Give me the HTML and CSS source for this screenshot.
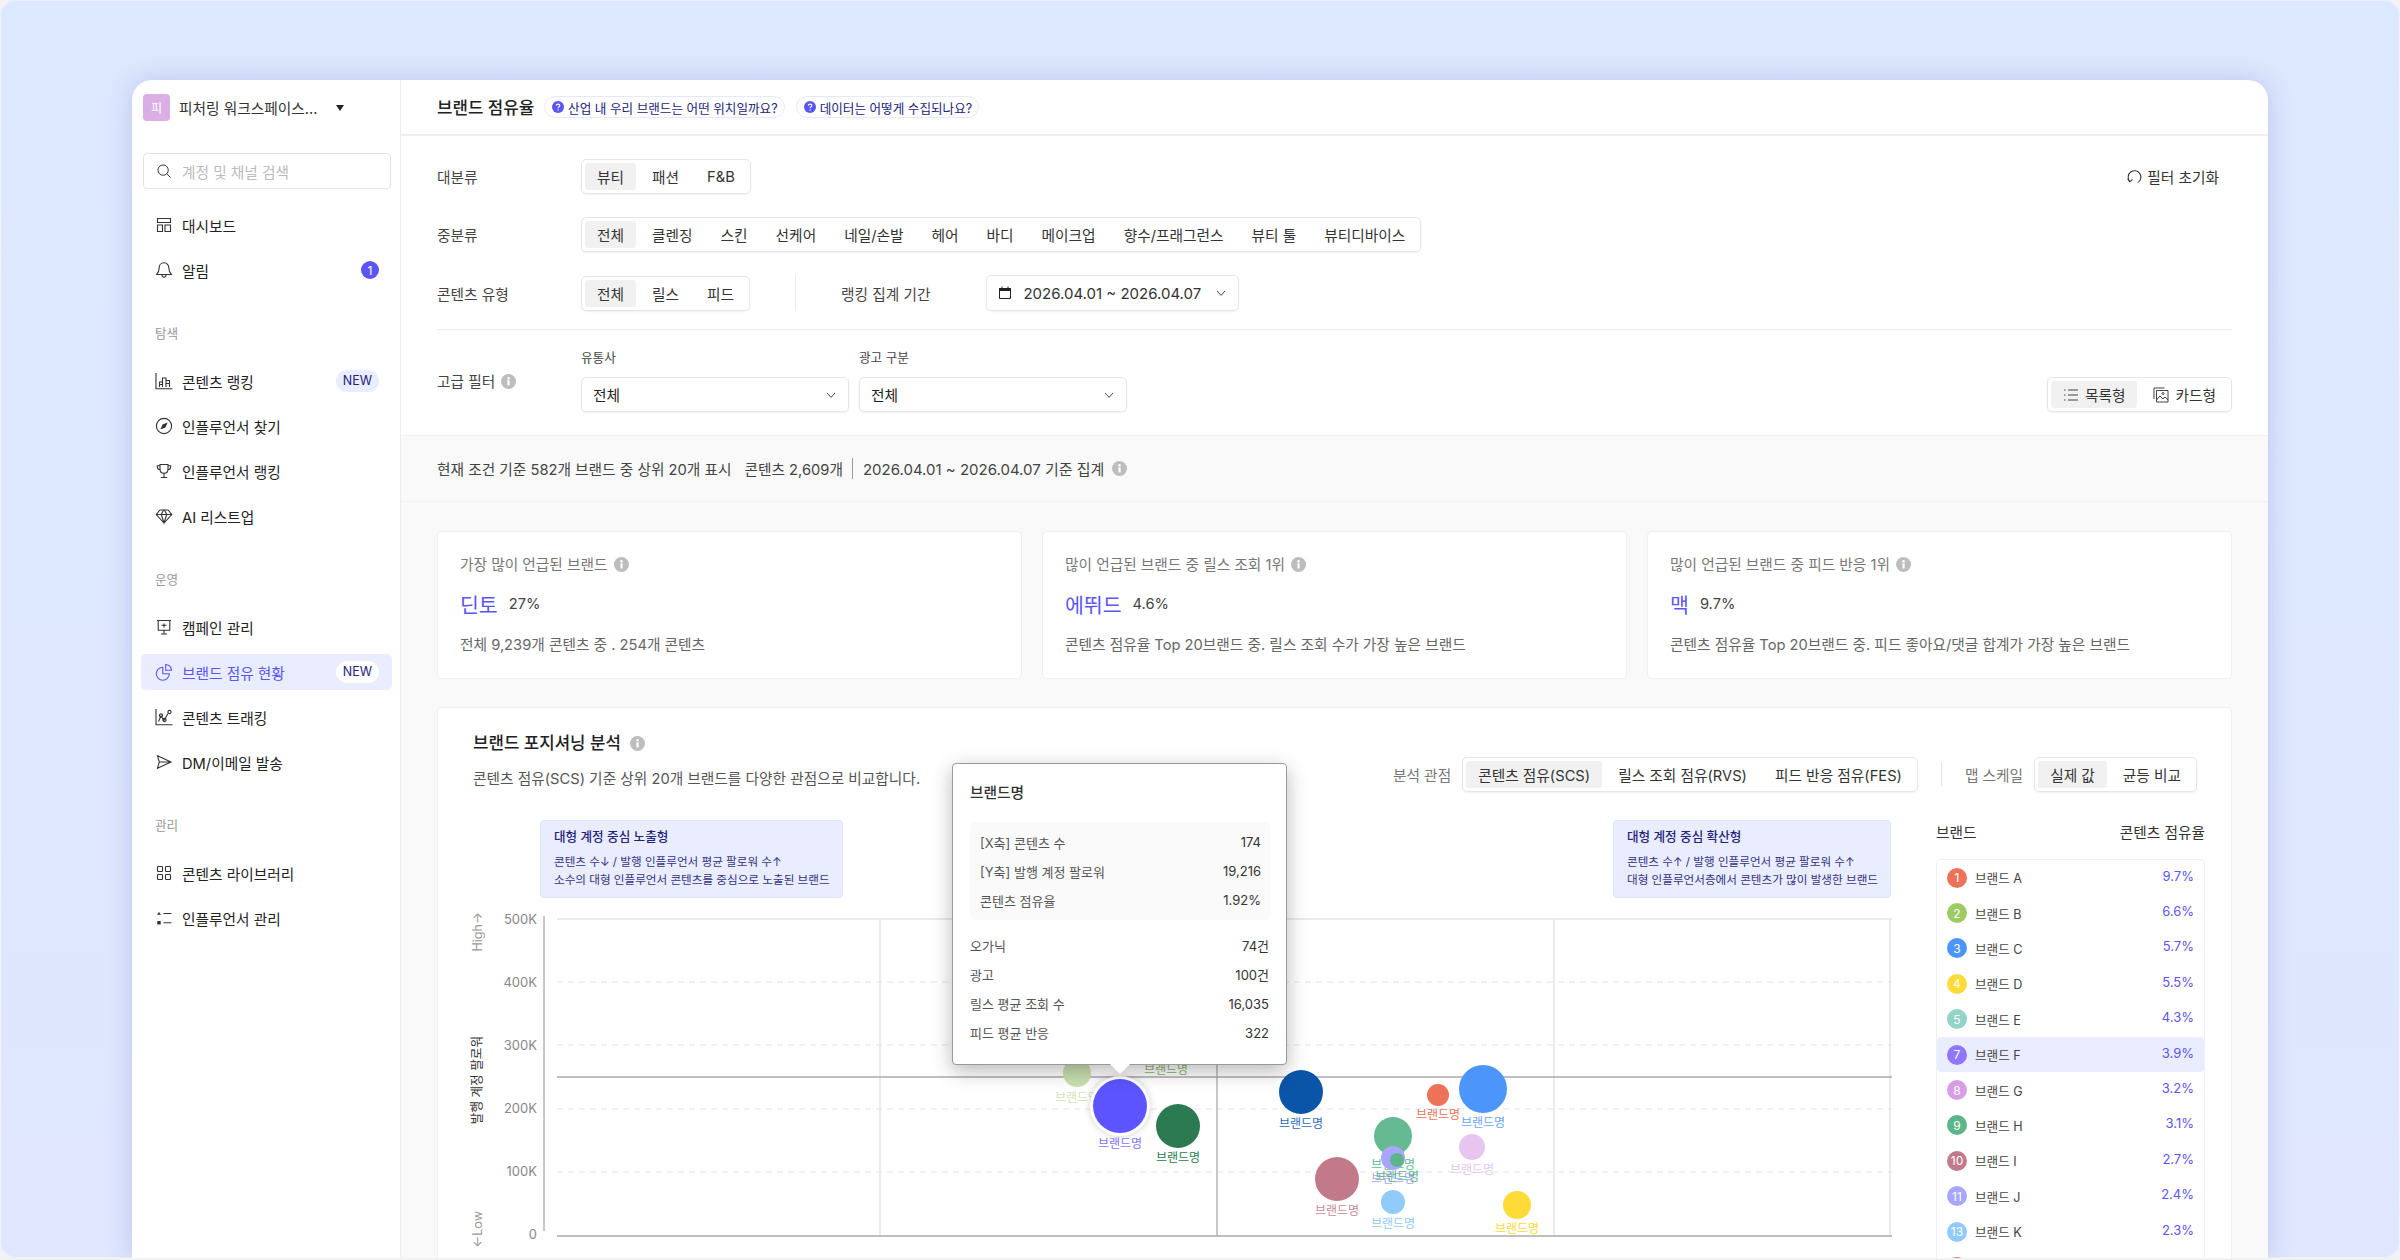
FILE: index.html
```html
<!DOCTYPE html>
<html lang="ko">
<head>
<meta charset="utf-8">
<title>브랜드 점유율</title>
<link rel="stylesheet" href="styles.css">
</head>
<body>
<svg class="defs" width="0" height="0" aria-hidden="true">
  <symbol id="i-info" viewBox="0 0 12 12"><circle cx="6" cy="6" r="6" fill="#bdbdbd"/><rect x="5.2" y="5" width="1.7" height="4.2" fill="#fff"/><circle cx="6" cy="3.3" r="1" fill="#fff"/></symbol>
  <symbol id="i-q" viewBox="0 0 12 12"><circle cx="6" cy="6" r="6" fill="#5b55f5"/><path d="M4.300 4.700c0-1 .8-1.600 1.800-1.600s1.700.6 1.700 1.500c0 1.300-1.700 1.300-1.700 2.600" fill="none" stroke="#fff" stroke-width="1.100"/><circle cx="6.100" cy="8.900" r=".7" fill="#fff"/></symbol>
  <symbol id="i-chev" viewBox="0 0 12 12"><path d="M2 4l4 4.400L10 4" fill="none" stroke="#444" stroke-width="1"/></symbol>
</svg>
<div class="frame">
  <div class="window">
    <aside class="side">
      <div class="workspace">
        <span class="ws-logo">피</span>
        <span class="ws-name">피처링 워크스페이스...</span>
        <span class="ws-caret"></span>
      </div>
      <div class="search">
        <svg class="ico" viewBox="0 0 18 18"><circle cx="8" cy="8" r="5.800"/><path d="M12.300 12.300l4 4"/></svg>
        <span>계정 및 채널 검색</span>
      </div>
      <nav class="nav">
        <a class="nav-item"><svg class="ico" viewBox="0 0 18 18"><path d="M2.500 2.500h13v4h-13zM2.500 9h5v6.500h-5zM10 9h5.500v6.500H10z"/></svg><span class="nav-text">대시보드</span></a>
        <a class="nav-item"><svg class="ico" viewBox="0 0 18 18"><path d="M9 1.800c-3 0-4.800 2.300-4.800 5 0 3.700-1.500 5.500-2.600 6.700h14.800c-1.100-1.200-2.600-3-2.600-6.700 0-2.700-1.800-5-4.800-5zM7 13.700c0 1.600.8 2.500 2 2.500s2-.9 2-2.500"/></svg><span class="nav-text">알림</span><span class="count">1</span></a>
        <div class="nav-label">탐색</div>
        <a class="nav-item"><svg class="ico" viewBox="0 0 18 18"><path d="M1 1v15.800h16.500M4.500 15V10h3v5M7.500 15V6h3.500v9M11 15V8.500h3.500V15M4.500 12.500h3M11 11.500h3.500"/></svg><span class="nav-text">콘텐츠 랭킹</span><span class="new">NEW</span></a>
        <a class="nav-item"><svg class="ico" viewBox="0 0 18 18"><circle cx="9" cy="9" r="7.600"/><path class="solid" d="M12.600 5.400L10.500 10.500 5.400 12.600 7.500 7.500z"/></svg><span class="nav-text">인플루언서 찾기</span></a>
        <a class="nav-item"><svg class="ico" viewBox="0 0 18 18"><path d="M5 2.500h8V7c0 2.600-1.700 4.300-4 4.300S5 9.600 5 7zM5 3.800H2.200C2.200 6.500 3.300 7.800 5.300 8M13 3.800h2.800c0 2.700-1.100 4-3.100 4.200M9 11.300v3.700M5.800 15.500h6.400"/></svg><span class="nav-text">인플루언서 랭킹</span></a>
        <a class="nav-item"><svg class="ico" viewBox="0 0 18 18"><path d="M5 3h8l3.800 4.500L9 16 1.200 7.500zM1.200 7.500h15.600M6.300 7.500L9 16l2.700-8.500L9.500 3h-1z"/></svg><span class="nav-text">AI 리스트업</span></a>
        <div class="nav-label">운영</div>
        <a class="nav-item"><svg class="ico" viewBox="0 0 18 18"><path d="M2 2.500h14M3.200 2.500v9.800h11.600V2.500M9 12.300v3.500M6 16h6M9 5.500v4M6.500 7.300h5"/></svg><span class="nav-text">캠페인 관리</span></a>
        <a class="nav-item active"><svg class="ico" viewBox="0 0 18 18"><path d="M7.800 4.200a6.500 6.500 0 1 0 6.500 6.500H7.800zM10.700 1.500v5.800h5.800a5.800 5.800 0 0 0-5.800-5.800z"/></svg><span class="nav-text">브랜드 점유 현황</span><span class="new">NEW</span></a>
        <a class="nav-item"><svg class="ico" viewBox="0 0 18 18"><path d="M1 1v15.800h16.500M3.500 13.500L6 8l3 4.500L13 5.500"/><circle cx="6" cy="7.500" r="1.600"/><circle cx="9.500" cy="12" r="1.600"/><circle cx="14.500" cy="4" r="1.600"/></svg><span class="nav-text">콘텐츠 트래킹</span></a>
        <a class="nav-item"><svg class="ico" viewBox="0 0 18 18"><path d="M2.500 2.800L16 9 2.500 15.200l1.800-6.200zM4.300 9H16"/></svg><span class="nav-text">DM/이메일 발송</span></a>
        <div class="nav-label">관리</div>
        <a class="nav-item"><svg class="ico" viewBox="0 0 18 18"><rect x="2.500" y="2.500" width="5" height="5" rx=".8"/><rect x="10.500" y="2.500" width="5" height="5" rx=".8"/><rect x="2.500" y="10.500" width="5" height="5" rx=".8"/><rect x="10.500" y="10.500" width="5" height="5" rx=".8"/></svg><span class="nav-text">콘텐츠 라이브러리</span></a>
        <a class="nav-item"><svg class="ico" viewBox="0 0 18 18"><path class="solid" d="M4 3l2 2.700H2zM2.300 12h3.400v3.400H2.300z"/><path d="M8.500 4.500h8M8.500 13.800h8"/></svg><span class="nav-text">인플루언서 관리</span></a>
      </nav>
    </aside>

    <main class="main">
      <header class="topbar">
        <h1 class="page-title">브랜드 점유율</h1>
        <a class="help"><svg class="help-i"><use href="#i-q"/></svg>산업 내 우리 브랜드는 어떤 위치일까요?</a>
        <a class="help"><svg class="help-i"><use href="#i-q"/></svg>데이터는 어떻게 수집되나요?</a>
      </header>

      <section class="filters">
        <div class="f-row">
          <span class="f-label">대분류</span>
          <div class="seg"><b class="on">뷰티</b><b>패션</b><b>F&amp;B</b></div>
          <a class="reset"><svg class="reset-i" viewBox="0 0 16 16"><path d="M3.500 12.500A6 6 0 1 1 11 13.800M1.500 10l2 3 2.600-2.200"/></svg>필터 초기화</a>
        </div>
        <div class="f-row">
          <span class="f-label">중분류</span>
          <div class="seg"><b class="on">전체</b><b>클렌징</b><b>스킨</b><b>선케어</b><b>네일/손발</b><b>헤어</b><b>바디</b><b>메이크업</b><b>향수/프래그런스</b><b>뷰티 툴</b><b>뷰티디바이스</b></div>
        </div>
        <div class="f-row">
          <span class="f-label">콘텐츠 유형</span>
          <div class="seg"><b class="on">전체</b><b>릴스</b><b>피드</b></div>
          <span class="f-div"></span>
          <span class="f-sub">랭킹 집계 기간</span>
          <div class="date">
            <svg class="cal" viewBox="0 0 14 14"><path class="cal-top" d="M1 2h12v3H1z"/><path class="cal-box" d="M1.500 2.500h11v10h-11zM4 .5v2M10 .5v2"/></svg>
            <span class="date-text">2026.04.01 ~ 2026.04.07</span>
            <svg class="chev"><use href="#i-chev"/></svg>
          </div>
        </div>
        <hr class="f-line">
        <div class="adv">
          <span class="f-label adv-label">고급 필터<svg class="info"><use href="#i-info"/></svg></span>
          <div class="adv-col"><span class="adv-cap">유통사</span><div class="select"><span>전체</span><svg class="chev"><use href="#i-chev"/></svg></div></div>
          <div class="adv-col"><span class="adv-cap">광고 구분</span><div class="select"><span>전체</span><svg class="chev"><use href="#i-chev"/></svg></div></div>
          <div class="seg view">
            <b class="on"><svg class="v-i" viewBox="0 0 16 16"><path d="M1 3h1.500M1 8h1.500M1 13h1.500M5 3h10M5 8h10M5 13h10"/></svg>목록형</b>
            <b><svg class="v-i" viewBox="0 0 16 16"><path d="M1 12V1h10.500M3.500 15V3.500H15V15zM3.500 13l3.500-4 3 3 2-2 3 3"/><circle cx="10" cy="6.500" r="1"/></svg>카드형</b>
          </div>
        </div>
      </section>

      <div class="summary">
        <span>현재 조건 기준 582개 브랜드 중 상위 20개 표시</span>
        <span class="sum-c">콘텐츠 2,609개</span>
        <span class="sum-d">2026.04.01 ~ 2026.04.07 기준 집계</span>
        <svg class="info"><use href="#i-info"/></svg>
      </div>

      <div class="content">
        <div class="cards">
          <article class="card">
            <div class="c-title">가장 많이 언급된 브랜드<svg class="info"><use href="#i-info"/></svg></div>
            <div class="c-val"><strong>딘토</strong><span>27%</span></div>
            <div class="c-desc">전체 9,239개 콘텐츠 중 . 254개 콘텐츠</div>
          </article>
          <article class="card">
            <div class="c-title">많이 언급된 브랜드 중 릴스 조회 1위<svg class="info"><use href="#i-info"/></svg></div>
            <div class="c-val"><strong>에뛰드</strong><span>4.6%</span></div>
            <div class="c-desc">콘텐츠 점유율 Top 20브랜드 중. 릴스 조회 수가 가장 높은 브랜드</div>
          </article>
          <article class="card">
            <div class="c-title">많이 언급된 브랜드 중 피드 반응 1위<svg class="info"><use href="#i-info"/></svg></div>
            <div class="c-val"><strong>맥</strong><span>9.7%</span></div>
            <div class="c-desc">콘텐츠 점유율 Top 20브랜드 중. 피드 좋아요/댓글 합계가 가장 높은 브랜드</div>
          </article>
        </div>

        <section class="panel">
          <div class="p-head">
            <div>
              <h2 class="p-title">브랜드 포지셔닝 분석<svg class="info info-l"><use href="#i-info"/></svg></h2>
              <p class="p-desc">콘텐츠 점유(SCS) 기준 상위 20개 브랜드를 다양한 관점으로 비교합니다.</p>
            </div>
            <div class="p-ctrl">
              <span class="f-sub gray">분석 관점</span>
              <div class="seg"><b class="on">콘텐츠 점유(SCS)</b><b>릴스 조회 점유(RVS)</b><b>피드 반응 점유(FES)</b></div>
              <span class="p-div"></span>
              <span class="f-sub gray">맵 스케일</span>
              <div class="seg"><b class="on">실제 값</b><b>균등 비교</b></div>
            </div>
          </div>

          <div class="p-body">
            <div class="chart">
              <div class="quads">
                <div class="quad">
                  <h3>대형 계정 중심 노출형</h3>
                  <p>콘텐츠 수↓ / 발행 인플루언서 평균 팔로워 수↑</p>
                  <p>소수의 대형 인플루언서 콘텐츠를 중심으로 노출된 브랜드</p>
                </div>
                <div class="quad">
                  <h3>대형 계정 중심 확산형</h3>
                  <p>콘텐츠 수↑ / 발행 인플루언서 평균 팔로워 수↑</p>
                  <p>대형 인플루언서층에서 콘텐츠가 많이 발생한 브랜드</p>
                </div>
              </div>

              <svg class="plot" viewBox="0 0 1430 340" width="1430" height="340">
                <g class="grid-v"><path d="M406 0V317M1080 0V317M1416 0V317"/></g>
                <g class="grid-h"><path d="M83 63H1418M83 126H1418M83 190H1418M83 253H1418"/></g>
                <path class="grid-top" d="M83 0H1418"/>
                <path class="axis" d="M70 -3V312M83 158H1418M83 317H1418M743 0V317"/>
              </svg>

              <span class="y-side y-high">High→</span>
              <span class="y-side y-name">발행 계정 팔로워</span>
              <span class="y-side y-low">←Low</span>
              <span class="tick" style="top:90px">500K</span>
              <span class="tick" style="top:153px">400K</span>
              <span class="tick" style="top:216px">300K</span>
              <span class="tick" style="top:279px">200K</span>
              <span class="tick" style="top:342px">100K</span>
              <span class="tick" style="top:405px">0</span>

              <div class="xticks"><span>0</span><span>25</span><span>50</span><span>75</span><span>100</span><span>125</span><span>150</span><span>175</span><span>200</span><span>225</span><span>250</span><span>275</span><span>300</span><span>325</span><span>350</span><span>375</span><span>400</span><span>425</span><span>450</span></div>

              <i class="bub" style="left:603px;top:253px;width:28px;height:28px;background:#c9e0b0"></i>
              <span class="blabel" style="left:603px;top:268px;color:#cfe3b8">브랜드명</span>
              <span class="blabel" style="left:692px;top:240px;color:#8cb56a">브랜드명</span>
              <i class="bub" style="left:704px;top:306px;width:44px;height:44px;background:#2b7a52"></i>
              <span class="blabel" style="left:704px;top:328px;color:#2b7a52">브랜드명</span>
              <i class="bub" style="left:827px;top:272px;width:44px;height:44px;background:#0b55a8"></i>
              <span class="blabel" style="left:827px;top:294px;color:#2f6cb8">브랜드명</span>
              <i class="bub" style="left:863px;top:359px;width:44px;height:44px;background:#c27a8a"></i>
              <span class="blabel" style="left:863px;top:381px;color:#c98a98">브랜드명</span>
              <i class="bub" style="left:919px;top:382px;width:24px;height:24px;background:#90cbf9"></i>
              <span class="blabel" style="left:919px;top:394px;color:#90cbf9">브랜드명</span>
              <i class="bub" style="left:919px;top:316px;width:38px;height:38px;background:#66ba91"></i>
              <span class="blabel" style="left:919px;top:335px;color:#66ba91">브랜드명</span>
              <span class="blabel" style="left:919px;top:349px;color:#a8a6ff">브랜드명</span>
              <span class="blabel" style="left:923px;top:347px;color:#5db58a">브랜드명</span>
              <i class="bub" style="left:919px;top:338px;width:24px;height:24px;background:#a8a6ff"></i>
              <i class="bub" style="left:923px;top:340px;width:14px;height:14px;background:#5db58a"></i>
              <i class="bub" style="left:964px;top:275px;width:22px;height:22px;background:#ec7358"></i>
              <span class="blabel" style="left:964px;top:285px;color:#ec7358">브랜드명</span>
              <i class="bub" style="left:1009px;top:269px;width:48px;height:48px;background:#4c96fb"></i>
              <span class="blabel" style="left:1009px;top:293px;color:#6aa7fb">브랜드명</span>
              <i class="bub" style="left:998px;top:327px;width:26px;height:26px;background:#e6c6ef"></i>
              <span class="blabel" style="left:998px;top:340px;color:#e6c6ef">브랜드명</span>
              <i class="bub" style="left:1043px;top:385px;width:28px;height:28px;background:#ffdb38"></i>
              <span class="blabel" style="left:1043px;top:399px;color:#ffdb38">브랜드명</span>
              <i class="bub selected" style="left:646px;top:286px;width:54px;height:54px;background:#5c54ff"></i>
              <span class="blabel" style="left:646px;top:314px;color:#7d76ff">브랜드명</span>

              <div class="tip">
                <div class="tip-title">브랜드명</div>
                <div class="tip-box">
                  <div class="tip-row"><span>[X축] 콘텐츠 수</span><b>174</b></div>
                  <div class="tip-row"><span>[Y축] 발행 계정 팔로워</span><b>19,216</b></div>
                  <div class="tip-row"><span>콘텐츠 점유율</span><b>1.92%</b></div>
                </div>
                <div class="tip-rows">
                  <div class="tip-row"><span>오가닉</span><b>74건</b></div>
                  <div class="tip-row"><span>광고</span><b>100건</b></div>
                  <div class="tip-row"><span>릴스 평균 조회 수</span><b>16,035</b></div>
                  <div class="tip-row"><span>피드 평균 반응</span><b>322</b></div>
                </div>
              </div>
            </div>

            <div class="rank">
              <div class="rank-head"><span>브랜드</span><span>콘텐츠 점유율</span></div>
              <ul class="rank-list">
                <li><i style="background:#ec7358">1</i><span>브랜드 A</span><b>9.7%</b></li>
                <li><i style="background:#9ccb62">2</i><span>브랜드 B</span><b>6.6%</b></li>
                <li><i style="background:#4c96fb">3</i><span>브랜드 C</span><b>5.7%</b></li>
                <li><i style="background:#ffdb38">4</i><span>브랜드 D</span><b>5.5%</b></li>
                <li><i style="background:#93d3c8">5</i><span>브랜드 E</span><b>4.3%</b></li>
                <li class="hl"><i style="background:#8f75ff">7</i><span>브랜드 F</span><b>3.9%</b></li>
                <li><i style="background:#d69fe3">8</i><span>브랜드 G</span><b>3.2%</b></li>
                <li><i style="background:#5db58a">9</i><span>브랜드 H</span><b>3.1%</b></li>
                <li><i style="background:#c27a8a">10</i><span>브랜드 I</span><b>2.7%</b></li>
                <li><i style="background:#a8a6ff">11</i><span>브랜드 J</span><b>2.4%</b></li>
                <li><i style="background:#90cbf9">13</i><span>브랜드 K</span><b>2.3%</b></li>
                <li><i style="background:#ec7358">14</i><span>브랜드 L</span><b>2.1%</b></li>
              </ul>
            </div>
          </div>
        </section>
      </div>
    </main>
  </div>
</div>
</body>
</html>
```
FILE: styles.css
```css
* { box-sizing: border-box; }
html, body { margin: 0; height: 1260px; overflow: hidden; background: #f2f2f2; }
body { font-family: Inter, "Noto Sans CJK KR", sans-serif; font-size: 14.7px; color: #222; }
.defs { position: absolute; }
h1, h2, h3, p, ul { margin: 0; padding: 0; }

.frame { height: 1258px; padding: 80px 132px 0; background: linear-gradient(180deg, #dce8fd, #dfe6fd); border-radius: 16px; overflow: hidden; box-shadow: inset 0 0 0 1px #eef1f8; }
.window { display: flex; height: 1178px; background: #fff; border-radius: 20px 20px 0 0; overflow: hidden; box-shadow: 0 0 24px rgba(70, 80, 190, .22); }

/* sidebar */
.side { flex: 0 0 269px; padding: 14px 8px 0 9px; border-right: 1px solid #eee; }
.workspace { display: flex; align-items: center; height: 27px; padding-left: 2px; }
.ws-logo { display: flex; align-items: center; justify-content: center; width: 27px; height: 27px; border-radius: 4px; background: #dcaee6; color: #fff; font-size: 12px; }
.ws-name { margin-left: 9px; font-size: 14.7px; color: #333; width: 157px; white-space: nowrap; }
.ws-caret { width: 0; height: 0; border: 4.5px solid transparent; border-top: 6px solid #222; border-bottom: 0; }
.search { display: flex; align-items: center; gap: 10px; height: 36px; margin: 32px 1px 18px 2px; padding: 0 12px; border: 1px solid #e2e2e2; border-radius: 4px; color: #bbb; font-size: 14.7px; }
.search .ico { width: 16px; height: 16px; }
.ico { flex: none; width: 18px; height: 18px; fill: none; stroke: #333; stroke-width: 1.1; }
.ico .solid { fill: #333; stroke: none; }
.nav { display: flex; flex-direction: column; gap: 9px; }
.nav-item { display: flex; align-items: center; gap: 9px; height: 36px; padding: 0 13px 0 14px; border-radius: 5px; font-size: 14.7px; color: #222; }
.nav-text { flex: 1; }
.nav-label { margin: 28px 0 11px 14px; height: 18px; line-height: 18px; font-size: 12.6px; color: #999; }
.count { display: flex; align-items: center; justify-content: center; width: 18px; height: 18px; border-radius: 50%; background: #5b55f5; color: #fff; font-size: 12px; }
.new { padding: 0 7px; height: 22px; line-height: 21px; border-radius: 12px; background: #e9edff; color: #23237a; font-size: 12.5px; }
.nav-item.active { background: #e9edff; color: #5b55f5; }
.nav-item.active .ico { stroke: #5b55f5; }
.nav-item.active .new { background: #fff; color: #23237a; }

/* main */
.main { flex: 1; min-width: 0; }
.topbar { display: flex; align-items: center; gap: 11px; height: 56px; padding: 0 36px; border-bottom: 2px solid #eee; }
.page-title { font-size: 16.8px; font-weight: 500; margin-right: -1px; white-space: nowrap; }
.help { display: flex; align-items: center; gap: 4px; height: 22px; padding: 0 6px 0 7px; border: 1px solid #e6e9fd; border-radius: 11px; font-size: 12.6px; color: #23237a; white-space: nowrap; }
.help-i { width: 12px; height: 12px; }
.info { width: 15px; height: 15px; margin-left: 6px; vertical-align: -2px; }
.info-l { margin-left: 9px; }

.filters { height: 300px; padding: 23px 36px 0; border-bottom: 1px solid #f0f0f0; }
.f-row { display: flex; align-items: center; margin-bottom: 23px; }
.f-label { flex: 0 0 144px; color: #444; }
.seg { display: inline-flex; gap: 4px; padding: 3px; border: 1px solid #e6e6e6; border-radius: 5px; box-shadow: 0 1px 2px rgba(0, 0, 0, .06); }
.seg b { display: flex; align-items: center; height: 27px; padding: 0 12px; border-radius: 3px; font-weight: 400; font-size: 14.7px; color: #333; white-space: nowrap; }
.seg b.on { background: #f1f1f1; }
.reset { display: flex; align-items: center; gap: 4px; margin-left: auto; margin-right: 13px; color: #333; }
.reset-i { width: 17px; height: 17px; fill: none; stroke: #333; stroke-width: 1; }
.f-div { width: 1px; height: 36px; margin: 0 45px; background: #eee; }
.f-sub { color: #444; white-space: nowrap; }
.f-sub.gray { color: #777; }
.date { display: flex; align-items: center; gap: 11px; width: 253px; height: 36px; margin-left: 56px; padding: 0 11px; border: 1px solid #e6e6e6; border-radius: 5px; box-shadow: 0 1px 2px rgba(0, 0, 0, .06); color: #333; }
.date .chev { margin-left: auto; }
.date-text { font-size: 15px; }
.cal { width: 14px; height: 14px; }
.cal-top { fill: #222; }
.cal-box { fill: none; stroke: #222; stroke-width: 1; }
.chev { width: 12px; height: 12px; flex: none; }
.f-line { height: 1px; margin: -5px 0 0; border: 0; background: #eee; }
.adv { display: flex; align-items: flex-end; margin-top: 19px; }
.adv-label { align-self: center; margin-top: -1px; }
.adv-col { display: flex; flex-direction: column; width: 268px; margin-right: 10px; gap: 10px; }
.adv-cap { font-size: 12.6px; color: #444; height: 18px; line-height: 18px; }
.select { display: flex; align-items: center; justify-content: space-between; height: 35px; padding: 0 11px; border: 1px solid #e6e6e6; border-radius: 5px; box-shadow: 0 1px 2px rgba(0, 0, 0, .06); }
.view { margin-left: auto; }
.view b { gap: 6px; }
.v-i { width: 16px; height: 16px; fill: none; stroke: #444; stroke-width: 1; }

.summary { display: flex; align-items: center; height: 66px; padding: 0 36px; background: #f9f9f9; border-bottom: 1px solid #f0f0f0; color: #444; white-space: nowrap; }
.sum-c { margin-left: 13px; padding-right: 9px; border-right: 1px solid #999; }
.sum-d { margin-left: 10px; font-size: 15px; }
.summary .info { margin-left: 8px; }
.content { padding: 29px 36px 0; background: #f9f9f9; height: 800px; }
.cards { display: grid; grid-template-columns: repeat(3, 1fr); gap: 20px; }
.card { height: 148px; padding: 23px 22px 0; background: #fff; border: 1px solid #f0f0f0; border-radius: 5px; }
.c-title { height: 20px; line-height: 20px; color: #777; }
.c-val { display: flex; align-items: center; gap: 11px; height: 32px; margin-top: 13px; }
.c-val strong { font-size: 20.5px; font-weight: 400; color: #5b55f5; }
.c-val span { color: #444; }
.c-desc { margin-top: 13px; color: #666; }

.panel { margin-top: 28px; height: 600px; padding: 23px 28px 0 36px; background: #fff; border: 1px solid #f0f0f0; border-radius: 5px; }
.p-head { display: flex; justify-content: space-between; margin-left: -1px; }
.p-title { height: 24px; line-height: 24px; font-size: 16.8px; font-weight: 500; }
.p-desc { margin-top: 14px; color: #555; line-height: 20px; }
.p-ctrl { display: flex; align-items: center; height: 36px; margin: 25px 6px 0 0; }
.p-ctrl .f-sub { margin-right: 11px; }
.p-div { width: 1px; height: 24px; margin: 0 23px; background: #e4e4e4; }
.p-body { display: flex; margin-top: 28px; }

.chart { position: relative; flex: 0 0 1462px; height: 460px; }
.quads { display: flex; justify-content: space-between; width: 1417px; height: 78px; padding-left: 66px; }
.quad { width: 303px; padding: 7px 13px; background: #eaedff; border: 1px solid #dfe4fb; border-radius: 4px; color: #33337f; font-size: 11.6px; line-height: 18px; }
.quad + .quad { width: 278px; }
.quad h3 { font-size: 12.6px; font-weight: 500; color: #23237a; line-height: 18px; margin-bottom: 7px; }
.quad p { white-space: nowrap; }
.plot { position: absolute; left: 0; top: 99px; overflow: visible; fill: none; }
.grid-v path { stroke: #e5e5e5; stroke-width: 1.5; }
.grid-h path { stroke: #e3e3e3; stroke-width: 1; stroke-dasharray: 6 5; }
.grid-top { stroke: #e5e5e5; stroke-width: 1.5; }
.axis { stroke: #aaa; stroke-width: 1.3; }
.y-side { position: absolute; writing-mode: vertical-rl; text-orientation: sideways; transform: rotate(180deg); font-size: 12.6px; color: #999; white-space: nowrap; }
.y-high { left: -4px; top: 92px; }
.y-low { left: -4px; top: 391px; }
.y-name { left: -8px; top: 216px; color: #333; }
.tick { position: absolute; left: 0; width: 63px; text-align: right; font-size: 13px; line-height: 18px; color: #888; }
.xticks { position: absolute; left: 52px; top: 437px; display: flex; }
.xticks span { width: 72px; text-align: center; font-size: 12px; line-height: 14px; color: #999; }

.bub { position: absolute; border-radius: 50%; transform: translate(-50%, -50%); }
.bub.selected { box-shadow: 0 0 0 3px #fff, 0 0 6px 4px rgba(0, 0, 0, .15); }
.blabel { position: absolute; transform: translate(-50%, 3px); font-size: 12px; line-height: 14px; white-space: nowrap; }
.tip { position: absolute; left: 478px; top: -57px; width: 335px; height: 302px; padding: 19px 17px; background: #fff; border: 1px solid #999; border-radius: 4px; box-shadow: 0 6px 20px rgba(0, 0, 0, .28); }
.tip::after { content: ""; position: absolute; left: 157px; bottom: -10px; width: 0; height: 0; border: 10px solid transparent; border-top-color: #fff; border-bottom: 0; }
.tip-title { font-size: 14.7px; font-weight: 500; line-height: 20px; color: #333; }
.tip-box { margin-top: 19px; padding: 5.5px 10px; width: 301px; background: #fafafa; border-radius: 6px; }
.tip-rows { margin-top: 11px; }
.tip-row { display: flex; justify-content: space-between; align-items: center; height: 29px; font-size: 13px; color: #555; }
.tip-row b { font-weight: 400; color: #333; font-size: 13px; }

.rank { flex: 0 0 269px; }
.rank-head { display: flex; justify-content: space-between; height: 26px; line-height: 26px; color: #333; }
.rank-list { margin-top: 13px; list-style: none; border: 1px solid #f0f0f0; border-radius: 5px; height: 410px; overflow: hidden; }
.rank-list li { display: flex; align-items: center; height: 35.4px; padding: 0 10px; font-size: 12.6px; color: #444; }
.rank-list li.hl { background: #e9edff; border-radius: 4px; }
.rank-list i { display: flex; align-items: center; justify-content: center; width: 20px; height: 20px; border-radius: 50%; color: #fff; font-style: normal; font-size: 12px; }
.rank-list span { flex: 1; margin-left: 8px; }
.rank-list b { position: relative; top: -2px; font-weight: 400; font-size: 13px; color: #5b55f5; }
```
